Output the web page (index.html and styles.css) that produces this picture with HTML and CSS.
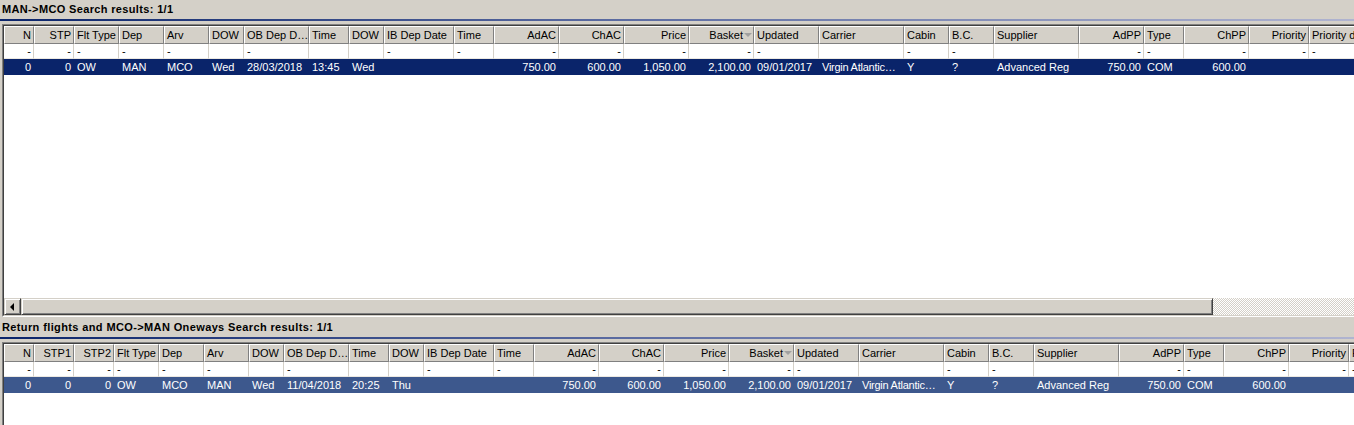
FILE: index.html
```html
<!DOCTYPE html>
<html>
<head>
<meta charset="utf-8">
<link rel="stylesheet" href="styles.css">
</head>
<body>
<div class="panel">
  <div class="title">MAN-&gt;MCO Search results: 1/1</div>
  <div class="rule"></div>
  <div class="grid grid-top">
    <div class="grid-inner">
      <div class="rows">
        <div class="row head">
          <div class="c c30 r">N</div><div class="c c40 r">STP</div><div class="c c45">Flt Type</div><div class="c c45">Dep</div><div class="c c45">Arv</div><div class="c c35">DOW</div><div class="c c65">OB Dep D…</div><div class="c c40">Time</div><div class="c c35">DOW</div><div class="c c70">IB Dep Date</div><div class="c c40">Time</div><div class="c c65 r">AdAC</div><div class="c c65 r">ChAC</div><div class="c c65 r">Price</div><div class="c c65 r sort">Basket<span class="arrow-down"></span></div><div class="c c65">Updated</div><div class="c c85">Carrier</div><div class="c c45">Cabin</div><div class="c c45">B.C.</div><div class="c c85">Supplier</div><div class="c c65 r">AdPP</div><div class="c c40">Type</div><div class="c c65 r">ChPP</div><div class="c c60 r">Priority</div><div class="c c90">Priority date</div>
        </div>
        <div class="row filter">
          <div class="c c30 r">-</div><div class="c c40 r">-</div><div class="c c45">-</div><div class="c c45">-</div><div class="c c45">-</div><div class="c c35"></div><div class="c c65">-</div><div class="c c40"></div><div class="c c35"></div><div class="c c70">-</div><div class="c c40">-</div><div class="c c65 r">-</div><div class="c c65 r">-</div><div class="c c65 r">-</div><div class="c c65 r">-</div><div class="c c65">-</div><div class="c c85"></div><div class="c c45">-</div><div class="c c45">-</div><div class="c c85"></div><div class="c c65 r">-</div><div class="c c40">-</div><div class="c c65 r">-</div><div class="c c60 r">-</div><div class="c c90">-</div>
        </div>
        <div class="row data sel-active">
          <div class="c c30 r">0</div><div class="c c40 r">0</div><div class="c c45">OW</div><div class="c c45">MAN</div><div class="c c45">MCO</div><div class="c c35">Wed</div><div class="c c65">28/03/2018</div><div class="c c40">13:45</div><div class="c c35">Wed</div><div class="c c70"></div><div class="c c40"></div><div class="c c65 r">750.00</div><div class="c c65 r">600.00</div><div class="c c65 r">1,050.00</div><div class="c c65 r">2,100.00</div><div class="c c65">09/01/2017</div><div class="c c85 tight">Virgin Atlantic…</div><div class="c c45">Y</div><div class="c c45">?</div><div class="c c85">Advanced Reg</div><div class="c c65 r">750.00</div><div class="c c40">COM</div><div class="c c65 r">600.00</div><div class="c c60 r"></div><div class="c c90"></div>
        </div>
      </div>
      <div class="hscroll">
        <div class="sbtn"><span class="arrow-left"></span></div>
        <div class="thumb"></div>
        <div class="track"></div>
      </div>
    </div>
  </div>

  <div class="title title-long">Return flights and MCO-&gt;MAN Oneways Search results: 1/1</div>
  <div class="rule"></div>
  <div class="grid grid-bottom">
    <div class="grid-inner">
      <div class="rows">
        <div class="row head">
          <div class="c c30 r">N</div><div class="c c40 r">STP1</div><div class="c c40 r">STP2</div><div class="c c45">Flt Type</div><div class="c c45">Dep</div><div class="c c45">Arv</div><div class="c c35">DOW</div><div class="c c65">OB Dep D…</div><div class="c c40">Time</div><div class="c c35">DOW</div><div class="c c70">IB Dep Date</div><div class="c c40">Time</div><div class="c c65 r">AdAC</div><div class="c c65 r">ChAC</div><div class="c c65 r">Price</div><div class="c c65 r sort">Basket<span class="arrow-down"></span></div><div class="c c65">Updated</div><div class="c c85">Carrier</div><div class="c c45">Cabin</div><div class="c c45">B.C.</div><div class="c c85">Supplier</div><div class="c c65 r">AdPP</div><div class="c c40">Type</div><div class="c c65 r">ChPP</div><div class="c c60 r">Priority</div><div class="c c90">Priority date</div>
        </div>
        <div class="row filter">
          <div class="c c30 r">-</div><div class="c c40 r">-</div><div class="c c40 r">-</div><div class="c c45">-</div><div class="c c45">-</div><div class="c c45">-</div><div class="c c35"></div><div class="c c65">-</div><div class="c c40"></div><div class="c c35"></div><div class="c c70">-</div><div class="c c40">-</div><div class="c c65 r">-</div><div class="c c65 r">-</div><div class="c c65 r">-</div><div class="c c65 r">-</div><div class="c c65">-</div><div class="c c85"></div><div class="c c45">-</div><div class="c c45">-</div><div class="c c85"></div><div class="c c65 r">-</div><div class="c c40">-</div><div class="c c65 r">-</div><div class="c c60 r">-</div><div class="c c90">-</div>
        </div>
        <div class="row data sel-inactive">
          <div class="c c30 r">0</div><div class="c c40 r">0</div><div class="c c40 r">0</div><div class="c c45">OW</div><div class="c c45">MCO</div><div class="c c45">MAN</div><div class="c c35">Wed</div><div class="c c65">11/04/2018</div><div class="c c40">20:25</div><div class="c c35">Thu</div><div class="c c70"></div><div class="c c40"></div><div class="c c65 r">750.00</div><div class="c c65 r">600.00</div><div class="c c65 r">1,050.00</div><div class="c c65 r">2,100.00</div><div class="c c65">09/01/2017</div><div class="c c85 tight">Virgin Atlantic…</div><div class="c c45">Y</div><div class="c c45">?</div><div class="c c85">Advanced Reg</div><div class="c c65 r">750.00</div><div class="c c40">COM</div><div class="c c65 r">600.00</div><div class="c c60 r"></div><div class="c c90"></div>
        </div>
      </div>
    </div>
  </div>
</div>
</body>
</html>
```

FILE: styles.css
```css
html, body {
  margin: 0;
  padding: 0;
  background: #d4d0c8;
  overflow: hidden;
  width: 1354px;
  height: 425px;
}
body {
  font-family: "Liberation Sans", Arial, sans-serif;
  font-size: 11px;
  color: #000;
}
.panel {
  display: flex;
  flex-direction: column;
  width: 1354px;
  height: 425px;
  overflow: hidden;
}
.title {
  flex-shrink: 0;
  height: 19px;
  box-sizing: border-box;
  padding: 2px 0 0 2px;
  line-height: 15px;
  font-weight: bold;
  letter-spacing: 0.35px;
  white-space: nowrap;
}
.title-long {
  letter-spacing: 0.38px;
}
.rule {
  flex-shrink: 0;
  height: 2px;
  margin-bottom: 3px;
  background: linear-gradient(90deg, #0a246a 0%, #5a6aa0 45%, #b0b4d0 100%);
}
.grid {
  flex-shrink: 0;
  margin-left: 2px;
  width: 1500px;
  border: 1px solid;
  border-color: #808080 #fff #fff #808080;
  box-sizing: border-box;
}
.grid-top {
  height: 293px;
  margin-bottom: 1px;
}
.grid-bottom {
  height: 120px;
}
.grid-inner {
  height: 100%;
  box-sizing: border-box;
  border: 1px solid;
  border-color: #404040 #d4d0c8 #d4d0c8 #404040;
  background: #fff;
  display: flex;
  flex-direction: column;
}
.rows {
  flex: 1;
  display: flex;
  flex-direction: column;
  background: #fff;
}
.row {
  display: flex;
  flex-shrink: 0;
}
.c {
  box-sizing: border-box;
  flex-shrink: 0;
  white-space: nowrap;
  overflow: hidden;
  padding: 0 3px;
}
.c.r { text-align: right; }
.c.tight { letter-spacing: -0.25px; }
.c30 { width: 30px; }
.c35 { width: 35px; }
.c40 { width: 40px; }
.c45 { width: 45px; }
.c60 { width: 60px; }
.c65 { width: 65px; }
.c70 { width: 70px; }
.c85 { width: 85px; }
.c90 { width: 90px; }

.head .c {
  height: 18px;
  line-height: 17px;
  padding: 0 2px;
  background: #d4d0c8;
  border: 1px solid;
  border-color: #fff #808080 #808080 #fff;
}
.head .sort {
  display: flex;
  justify-content: flex-end;
  align-items: center;
  padding-right: 1px;
}
.arrow-down {
  display: inline-block;
  width: 0;
  height: 0;
  margin-left: 1px;
  border-left: 4px solid transparent;
  border-right: 4px solid transparent;
  border-top: 4px solid #a0a0a0;
}
.filter .c {
  height: 15px;
  line-height: 15px;
  padding: 0 2px 0 3px;
  border-right: 1px solid #d4d0c8;
  border-bottom: 1px solid #ece9e2;
}
.data {
  height: 16px;
  color: #fff;
}
.data .c {
  height: 16px;
  line-height: 17px;
}
.sel-active { background: #0a246a; }
.sel-inactive { background: #3d588d; }

.hscroll {
  height: 17px;
  display: flex;
  flex-shrink: 0;
}
.sbtn, .thumb {
  box-sizing: border-box;
  background: #d4d0c8;
  border: 1px solid;
  border-color: #d4d0c8 #404040 #404040 #d4d0c8;
  box-shadow: inset 1px 1px #fff, inset -1px -1px #808080;
}
.sbtn {
  width: 17px;
  display: flex;
  align-items: center;
  justify-content: center;
}
.arrow-left {
  width: 0;
  height: 0;
  margin-right: 2px;
  border-top: 4px solid transparent;
  border-bottom: 4px solid transparent;
  border-right: 4px solid #000;
}
.thumb {
  width: 1192px;
}
.track {
  flex: 1;
  background-color: #d4d0c8;
  background-image: repeating-conic-gradient(#fff 0 25%, #d4d0c8 0 50%);
  background-size: 2px 2px;
}
```
